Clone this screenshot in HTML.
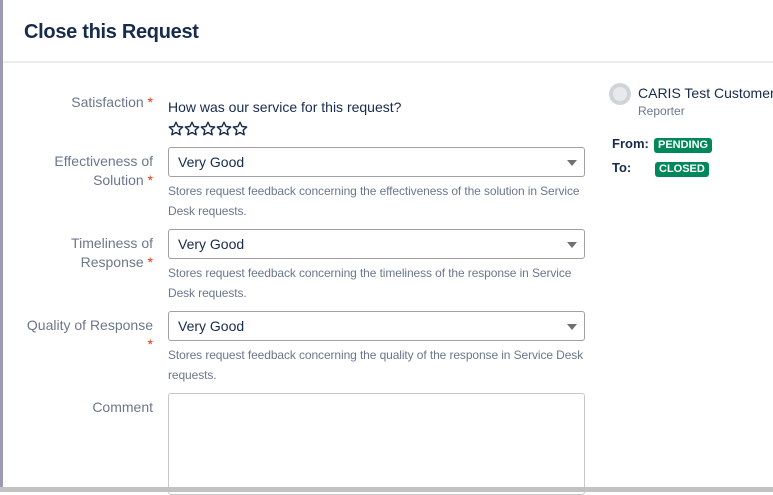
<!DOCTYPE html>
<html><head><style>
body{margin:0;width:773px;height:492px;overflow:hidden;background:#fff;font-family:"Liberation Sans",sans-serif;position:relative}
.strip{position:absolute;left:0;top:0;width:3px;height:492px;background:#9a9ab5}
.hdr{position:absolute;left:3px;top:0;right:0;height:61px;border-bottom:2px solid #ebecf0;background:#fff}
.hdr h1{margin:0;position:absolute;left:21px;top:21px;font-size:20px;font-weight:bold;color:#172b4d;letter-spacing:-0.3px}
.lbl{position:absolute;right:620px;text-align:right;font-size:14px;color:#6b778c;line-height:19px}
.req{color:#de350b}
.sel{position:absolute;left:168px;width:415px;height:28px;border:1px solid #a0a0a0;border-radius:3px;font-size:14px;color:#172b4d;line-height:28px}
.sel span{margin-left:9px}
.sel i{position:absolute;right:7px;top:12px;width:0;height:0;border-left:5px solid transparent;border-right:5px solid transparent;border-top:6px solid #707070}
.help{position:absolute;left:168px;white-space:nowrap;font-size:12px;color:#6b778c;line-height:20px;letter-spacing:-0.1px}
.badge{display:inline-block;background:#00875a;color:#fff;font-size:11px;font-weight:bold;padding:1px 4px;border-radius:3px;line-height:13px}
.sb{position:absolute;left:0;top:487px;width:773px;height:5px;background:#c2c2c2}
</style></head><body>
<div class="strip"></div>
<div class="hdr"><h1>Close this Request</h1></div>
<div class="lbl" style="top:93px">Satisfaction <span class="req">*</span></div>
<div style="position:absolute;left:168px;top:99px;font-size:14px;color:#172b4d">How was our service for this request?</div>
<svg style="position:absolute;left:168px;top:121px" width="82" height="16" viewBox="0 0 82 16">
<defs><path id="s" d="M8 1.2l2 4.3 4.7.5-3.5 3.2 1 4.6L8 11.5 3.8 13.8l1-4.6L1.3 6l4.7-.5z" fill="none" stroke="#172b4d" stroke-width="1.4" stroke-linejoin="round"/></defs>
<use href="#s" x="0"/><use href="#s" x="16"/><use href="#s" x="32"/><use href="#s" x="48"/><use href="#s" x="64"/>
</svg>
<div class="lbl" style="top:152px">Effectiveness of<br>Solution <span class="req">*</span></div>
<div class="sel" style="top:147px"><span>Very Good</span><i></i></div>
<div class="help" style="top:181px">Stores request feedback concerning the effectiveness of the solution in Service<br>Desk requests.</div>
<div class="lbl" style="top:234px">Timeliness of<br>Response <span class="req">*</span></div>
<div class="sel" style="top:229px"><span>Very Good</span><i></i></div>
<div class="help" style="top:263px">Stores request feedback concerning the timeliness of the response in Service<br>Desk requests.</div>
<div class="lbl" style="top:316px">Quality of Response<br><span class="req">*</span></div>
<div class="sel" style="top:311px"><span>Very Good</span><i></i></div>
<div class="help" style="top:345px">Stores request feedback concerning the quality of the response in Service Desk<br>requests.</div>
<div class="lbl" style="top:398px">Comment</div>
<div style="position:absolute;left:168px;top:393px;width:415px;height:100px;border:1px solid #c8c8c8;border-radius:3px"></div>
<div style="position:absolute;left:609px;top:83px;width:22px;height:22px;border-radius:50%;background:#d0d3d8"><div style="position:absolute;left:4px;top:4px;width:14px;height:14px;border-radius:50%;background:#e8e9ec"></div></div>
<div style="position:absolute;left:638px;top:85px;font-size:14px;color:#172b4d;white-space:nowrap">CARIS Test Customer 1</div>
<div style="position:absolute;left:638px;top:104px;font-size:12px;color:#6b778c">Reporter</div>
<div style="position:absolute;left:612px;top:136px;font-size:13px;font-weight:bold;color:#172b4d">From:</div>
<div style="position:absolute;left:654px;top:135px"><span class="badge">PENDING</span></div>
<div style="position:absolute;left:612px;top:160px;font-size:13px;font-weight:bold;color:#172b4d">To:</div>
<div style="position:absolute;left:655px;top:159px"><span class="badge">CLOSED</span></div>
<div class="sb"></div>
</body></html>
